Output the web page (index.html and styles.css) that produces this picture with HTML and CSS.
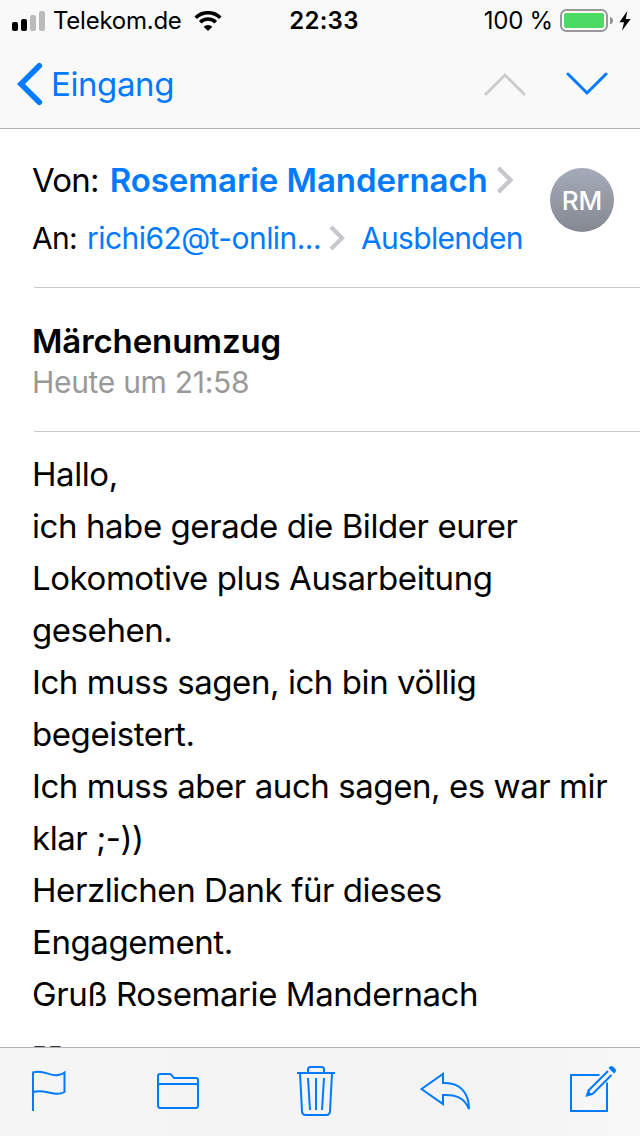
FILE: index.html
```html
<!DOCTYPE html>
<html lang="de">
<head>
  <meta charset="utf-8">
  <title>Märchenumzug</title>
  <link rel="stylesheet" href="styles.css">
</head>
<body>
  <header class="top">
    <div class="status-bar">
      <div class="status-left">
        <svg class="signal" width="34" height="20" viewBox="0 0 34 20">
          <rect x="0" y="11" width="6" height="9" rx="2"/>
          <rect x="9" y="8" width="6" height="12" rx="2"/>
          <rect class="off" x="18" y="4" width="6" height="16" rx="2"/>
          <rect class="off" x="27" y="0" width="6" height="20" rx="2"/>
        </svg>
        <span class="carrier">Telekom.de</span>
        <svg class="wifi" width="28" height="20" viewBox="0 0 28 20">
          <path d="M1.700 6.800 A17.500 17.500 0 0 1 26.300 6.800"/>
          <path d="M6.200 11.300 A11 11 0 0 1 21.800 11.300"/>
          <path class="dot" d="M9.700 15.800 A6.100 6.100 0 0 1 18.300 15.800 L14 20 Z"/>
        </svg>
      </div>
      <span class="time">22:33</span>
      <div class="status-right">
        <span class="percent">100 %</span>
        <svg class="battery" width="54" height="24" viewBox="0 0 54 24">
          <rect class="case" x="1" y="1" width="46" height="21" rx="5.500"/>
          <rect class="level" x="4" y="4" width="40" height="15" rx="2"/>
          <path class="cap" d="M50 8 Q53 9 53 11.700 Q53 14.400 50 15.400 Z"/>
        </svg>
        <svg class="bolt" width="12" height="20" viewBox="0 0 12 20">
          <path d="M8.300 0 L0.400 11.200 H5 L3 19.800 L11.600 7.900 H6.800 Z"/>
        </svg>
      </div>
    </div>
    <nav class="nav-bar">
      <a class="back">
        <svg width="26" height="44" viewBox="0 0 26 44">
          <path d="M22.300 3.800 L4 22 L22.300 40.200"/>
        </svg>
        <span class="back-label">Eingang</span>
      </a>
      <div class="arrows">
        <svg class="arrow prev" width="42" height="24" viewBox="0 0 42 24">
          <path d="M2 22 L21 3 L40 22"/>
        </svg>
        <svg class="arrow next" width="42" height="24" viewBox="0 0 42 24">
          <path d="M2 2 L21 21 L40 2"/>
        </svg>
      </div>
    </nav>
  </header>

  <main class="mail">
    <section class="addresses">
      <div class="rows">
        <div class="row from">
          <span class="from-label">Von:</span>
          <a class="sender">Rosemarie Mandernach</a>
          <svg class="chevron" width="18" height="28" viewBox="0 0 18 28">
            <path d="M2.500 2 L14.500 14 L2.500 26"/>
          </svg>
        </div>
        <div class="row to">
          <span class="to-label">An:</span>
          <a class="recipient">richi62@t-onlin...</a>
          <svg class="chevron" width="16" height="26" viewBox="0 0 16 26">
            <path d="M2 2 L13 13 L2 24"/>
          </svg>
          <a class="hide">Ausblenden</a>
        </div>
      </div>
      <div class="avatar">RM</div>
    </section>

    <section class="subject">
      <h1>Märchenumzug</h1>
      <p class="date">Heute um 21:58</p>
    </section>

    <div class="message">
      Hallo,<br>
      ich habe gerade die Bilder eurer<br>
      Lokomotive plus Ausarbeitung<br>
      gesehen.<br>
      Ich muss sagen, ich bin völlig<br>
      begeistert.<br>
      Ich muss aber auch sagen, es war mir<br>
      klar ;-))<br>
      Herzlichen Dank für dieses<br>
      Engagement.<br>
      Gruß Rosemarie Mandernach<br>
      <span class="dashes">--</span>
    </div>
  </main>

  <footer class="toolbar">
    <svg class="flag" width="36" height="52" viewBox="31 1065 36 52">
      <path d="M33 1111 V1072.500 C44 1069.500 50 1076.500 58 1075 Q62 1074.500 64.500 1072.500 V1092 Q60 1094.500 54 1093.500 C46 1092.500 42 1089.500 33 1092"/>
    </svg>
    <svg class="folder" width="44" height="52" viewBox="156 1065 44 52">
      <path d="M158 1105.500 V1076 Q158 1074 160 1074 H169.500 Q171 1074 172 1075.500 L173 1077 Q173.500 1078 175 1078 H196 Q198 1078 198 1080 V1105.500 Q198 1108 195.500 1108 H160.500 Q158 1108 158 1105.500 Z M158 1086 Q158 1084 160 1084 H196 Q198 1084 198 1086"/>
    </svg>
    <svg class="trash" width="40" height="52" viewBox="296 1065 40 52">
      <path d="M297 1073 H335 M308 1073 V1069.500 Q308 1067 310.500 1067 H321.500 Q324 1067 324 1069.500 V1073 M300 1073 L302 1111.500 Q302.300 1115 305.500 1115 H326.500 Q329.700 1115 330 1111.500 L332 1073 M308 1078 L310 1110 M316 1078 V1110 M324 1078 L322 1110"/>
    </svg>
    <svg class="reply" width="52" height="52" viewBox="419 1065 52 52">
      <path d="M421.500 1089 L443 1074 V1083 C460 1082 469 1093 469 1109 C464 1097 455 1094.500 443 1095 V1104 Z"/>
    </svg>
    <svg class="compose" width="48" height="52" viewBox="569 1065 48 52">
      <path d="M599.500 1075 H571 V1111 H607 V1082.500"/>
      <path class="pencil" d="M588.500 1090.500 L608 1071 M592.500 1094 L611.500 1075"/>
      <path class="solid" d="M585.500 1097 L587.800 1089.500 L589.500 1090.500 L590 1093 L592.500 1093.300 L593.200 1094.700 Z M608.500 1068 L610 1066.500 Q611.500 1065.500 613 1066.500 L615.500 1069 Q616.500 1070.500 615.500 1072 L614 1073.500 Z"/>
    </svg>
  </footer>
</body>
</html>
```

FILE: styles.css
```css
* {
  box-sizing: border-box;
}

body {
  margin: 0;
  height: 1136px;
  display: flex;
  flex-direction: column;
  overflow: hidden;
  background-color: #fff;
  color: #000;
  font-family: Inter, "Liberation Sans", sans-serif;
}

svg {
  display: block;
  flex: none;
  fill: none;
}

/* Status bar and navigation */

.top {
  flex: none;
  height: 129px;
  background-color: #f9f9f9;
  border-bottom: 1px solid #b2b2b2;
}

.status-bar {
  display: grid;
  grid-template-columns: 1fr auto 1fr;
  align-items: center;
  height: 40px;
  padding: 1px 9px 0 12px;
  font-size: 24px;
  line-height: 40px;
}

.status-left,
.status-right {
  display: flex;
  align-items: center;
}

.status-right {
  justify-content: flex-end;
}

.signal {
  fill: #000;
}

.signal .off {
  fill: #bbb;
}

.carrier {
  margin-left: 7px;
  letter-spacing: -0.25px;
}

.wifi {
  margin-left: 12px;
  stroke: #000;
  stroke-width: 3.6;
}

.wifi .dot {
  fill: #000;
  stroke: none;
}

.time {
  margin-left: 5px;
  font-weight: 600;
  letter-spacing: 0.25px;
}

.percent {
  letter-spacing: -0.2px;
}

.battery {
  margin-left: 7px;
}

.battery .case {
  stroke: #999;
  stroke-width: 2;
}

.battery .level {
  fill: #4cd964;
}

.battery .cap {
  fill: #8f8f8f;
}

.bolt {
  margin-left: 5px;
  fill: #000;
}

.nav-bar {
  display: flex;
  justify-content: space-between;
  align-items: center;
  height: 88px;
  padding: 0 32px 0 17px;
}

.back {
  display: flex;
  align-items: center;
  color: #007aff;
  font-size: 33px;
}

.back svg {
  stroke: #007aff;
  stroke-width: 5.6;
  stroke-linecap: round;
}

.back-label {
  margin-left: 8px;
  letter-spacing: -0.4px;
}

.arrows {
  display: flex;
  gap: 40px;
}

.arrow {
  stroke: #007aff;
  stroke-width: 3;
  stroke-linecap: round;
}

.arrow.prev {
  stroke: #ccc;
}

/* Mail */

.mail {
  flex: 1;
  min-height: 0;
  overflow: hidden;
}

.addresses {
  display: flex;
  justify-content: space-between;
  height: 159px;
  margin-left: 34px;
  padding: 31px 26px 0 0;
  border-bottom: 1px solid #c8c7cc;
}

.row {
  display: flex;
  align-items: center;
  height: 40px;
  margin-left: -2px;
  white-space: nowrap;
}

.from {
  font-size: 33px;
}

.from-label {
  letter-spacing: -0.8px;
}

.to {
  margin-top: 18px;
  font-size: 30px;
}

.to-label {
  letter-spacing: -0.7px;
}

.sender {
  margin-left: 11px;
  color: #007aff;
  font-weight: 600;
  letter-spacing: -0.05px;
}

.recipient,
.hide {
  color: #007aff;
}

.recipient {
  margin-left: 10px;
  letter-spacing: -0.55px;
}

.hide {
  margin-left: 16px;
  letter-spacing: -0.7px;
}

.chevron {
  margin-left: 8px;
  stroke: #c7c7cc;
  stroke-width: 4.2;
}

.avatar {
  flex: none;
  width: 64px;
  height: 64px;
  margin-top: 8px;
  border-radius: 50%;
  background: linear-gradient(#a5abb9, #858891);
  color: #fff;
  font-size: 26px;
  font-weight: 500;
  line-height: 66px;
  text-align: center;
}

.subject {
  height: 144px;
  margin-left: 34px;
  padding-top: 32px;
  border-bottom: 1px solid #c8c7cc;
}

.subject h1 {
  margin: 0 0 0 -2px;
  font-size: 33px;
  font-weight: 600;
  line-height: 42px;
  letter-spacing: -0.1px;
}

.date {
  margin: 0 0 0 -2px;
  color: #999;
  font-size: 30px;
  line-height: 40px;
  letter-spacing: -0.3px;
}

.message {
  padding: 16px 0 0 32px;
  font-size: 33px;
  line-height: 52px;
  letter-spacing: -0.43px;
  white-space: nowrap;
}

.dashes {
  letter-spacing: 0.5px;
}

/* Bottom toolbar */

.toolbar {
  flex: none;
  display: flex;
  height: 89px;
  padding: 17px 0 0 31px;
  background: linear-gradient(90deg, #f5f5f5, #f3f3f3 75%, #f8f8f8);
  border-top: 1px solid #b2b2b2;
  stroke: #007aff;
  stroke-width: 2;
}

.folder {
  margin-left: 89px;
}

.trash {
  margin-left: 96px;
}

.reply {
  margin-left: 83px;
}

.compose {
  margin-left: 98px;
}

.pencil {
  stroke-width: 2;
}

.solid {
  fill: #007aff;
  stroke: none;
}
```
